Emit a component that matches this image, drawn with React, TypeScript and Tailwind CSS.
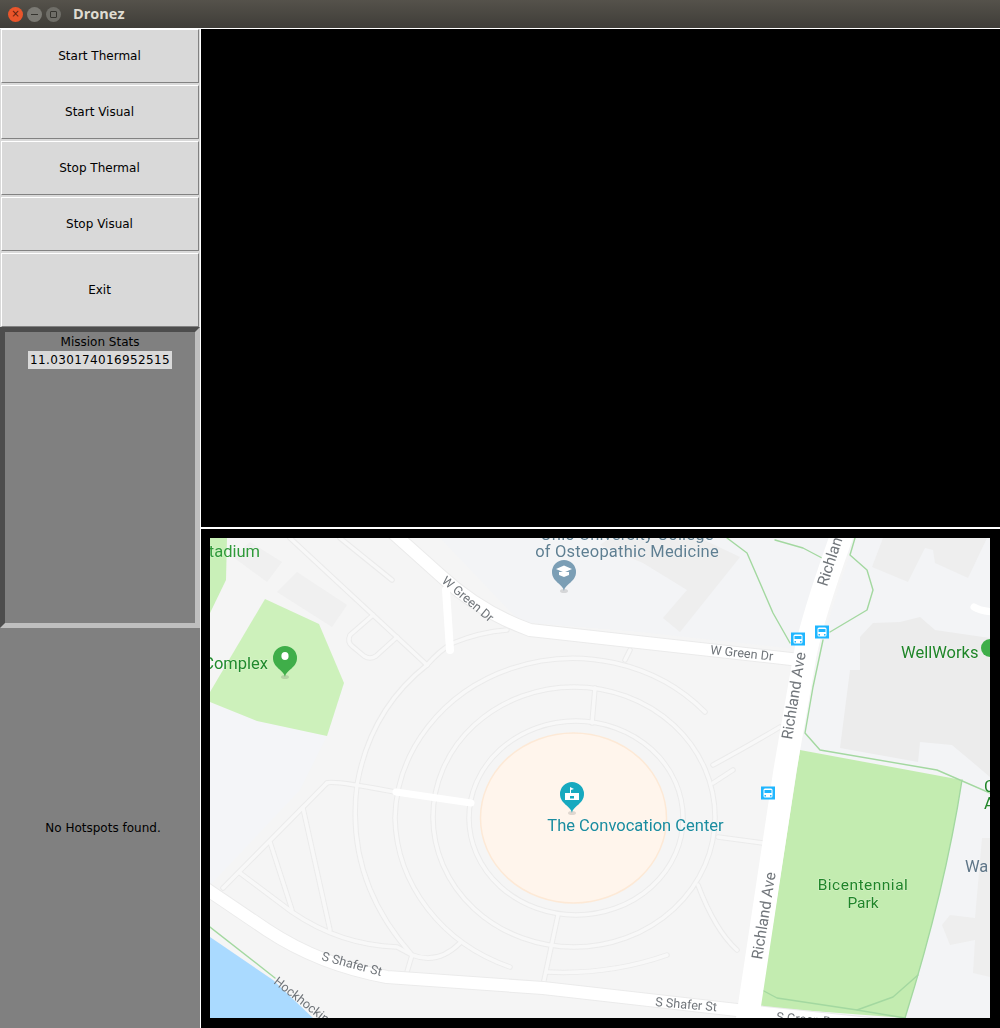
const buttons = [
  { label: 'Start Thermal', height: 'h-[54px]' },
  { label: 'Start Visual', height: 'h-[54px]' },
  { label: 'Stop Thermal', height: 'h-[54px]' },
  { label: 'Stop Visual', height: 'h-[54px]' },
  { label: 'Exit', height: 'h-[74px]' },
];

// service roads on the campus, drawn twice: grey casing and pale fill
const minorRoads = [
  'M 290 538 L 373 615 L 427 665',
  'M 340 538 L 392 580',
  'M 373 615 L 350 635 Q 347 642 352 646 L 364 656 Q 370 660 376 656 L 397 637',
  'M 427 665 Q 440 650 453 643 Q 480 632 507 630',
  'M 705 712 A 178 163 0 0 0 395 818 A 178 163 0 0 0 510 967',
  'M 547 972 Q 610 975 667 955',
  'M 427 665 Q 370 710 357 785 Q 345 880 412 955 Q 438 965 460 943',
  'M 327 783 L 223 888',
  'M 327 783 Q 332 780 395 792',
  'M 303 808 L 330 930',
  'M 270 842 L 292 910',
  'M 240 873 L 292 912 Q 340 945 397 947 L 412 955 L 407 972',
  'M 558 915 L 543 985',
  'M 595 688 L 592 723',
  'M 630 650 L 625 660',
  'M 713 783 L 733 770 M 713 765 Q 750 745 780 727',
  'M 718 837 L 763 843',
  'M 698 885 Q 715 930 737 950',
];

const greenPaths = [
  'M 727 538 L 747 553 L 773 613 L 790 643',
  'M 775 540 L 803 548 L 822 558',
  'M 855 538 L 850 555 L 867 570 L 873 590 L 867 610 L 830 632',
  'M 823 640 L 813 687 L 805 733 L 820 750 L 937 770 L 990 793',
  'M 762 990 L 777 998 L 857 1010 L 905 1018',
  'M 857 1010 L 893 997 L 918 975',
  'M 210 927 L 275 978',
  'M 962 780 Q 945 890 905 1018',
];

function BusStop({ x, y }: { x: number; y: number }) {
  return (
    <g transform={`translate(${x} ${y})`}>
      <rect x="-7" y="-6.5" width="14" height="13" fill="#1fb6ff" />
      <rect x="-4.5" y="-4.5" width="9" height="9" rx="1.5" fill="#ffffff" />
      <rect x="-3.5" y="-3" width="7" height="3" fill="#1fb6ff" />
      <rect x="-3.5" y="2" width="1.5" height="1.5" fill="#1fb6ff" />
      <rect x="2" y="2" width="1.5" height="1.5" fill="#1fb6ff" />
    </g>
  );
}

function Pin({ x, y, color }: { x: number; y: number; color: string }) {
  return (
    <g transform={`translate(${x} ${y})`}>
      <ellipse cx="0" cy="26" rx="4" ry="2" fill="#000000" opacity="0.12" />
      <path d="M 0 26 C -1 19 -12 17 -12 7 A 12 12 0 0 1 12 7 C 12 17 1 19 0 26 Z" fill={color} />
    </g>
  );
}

function MapPicture() {
  return (
    <svg
      viewBox="210 538 780 480"
      className="h-[480px] w-[780px] blur-[0.35px]"
      fontFamily="Roboto, sans-serif"
    >
      <rect x="210" y="538" width="780" height="480" fill="#f5f5f5" />

      {/* off campus ground */}
      <polygon points="210,690 345,683 327,736 300,790 215,880 210,885" fill="#f4f5f8" />
      <polygon points="440,538 855,538 805,650 640,632 520,622" fill="#f3f4f6" />
      <polygon points="855,538 990,538 990,1018 905,1018 962,780 800,750 822,640" fill="#f3f4f6" />

      {/* buildings */}
      <polygon points="233,557 250,542 282,562 267,582" fill="#f0f0f0" />
      <polygon points="277,592 297,572 347,605 332,627" fill="#f0f0f0" />
      <polygon points="740,557 680,632 663,618 687,590 643,563 600,545 610,538 700,538" fill="#eeeeee" />
      <polygon points="883,538 872,567 908,582 925,548 933,550 935,563 968,578 987,538" fill="#eeeeee" />
      <polygon points="873,623 900,622 920,617 935,630 990,638 990,777 970,760 952,745 920,742 918,762 840,748 850,670 860,670 860,637" fill="#ececec" />
      <polygon points="982,838 990,838 990,977 973,973 975,940 950,945 942,925 950,915 975,918" fill="#eeeeee" />

      {/* parks and water */}
      <polygon points="210,538 227,538 226,580 210,613" fill="#c9f0b8" />
      <polygon points="210,692 265,599 319,624 344,683 327,736 257,721 210,702" fill="#cdf1bb" />
      <path d="M 800 750 L 962 780 Q 945 890 905 1018 L 760 1007 Z" fill="#c3ecb0" />
      <polygon points="210,937 273,980 313,1018 210,1018" fill="#aadaff" />

      {/* convocation center */}
      <ellipse cx="573.5" cy="818" rx="93" ry="85" fill="#fff5ec" stroke="#fde9d6" strokeWidth="1.5" />

      {/* campus service roads */}
      <g fill="none" strokeLinecap="round" strokeLinejoin="round">
        <g stroke="#ebebeb" strokeWidth="5.5">
          <ellipse cx="576" cy="818" rx="107" ry="97" />
          <ellipse cx="574" cy="817" rx="141" ry="130" />
          {minorRoads.map((d) => (
            <path key={d} d={d} />
          ))}
        </g>
        <g stroke="#f8f8f8" strokeWidth="3.5">
          <ellipse cx="576" cy="818" rx="107" ry="97" />
          <ellipse cx="574" cy="817" rx="141" ry="130" />
          {minorRoads.map((d) => (
            <path key={d} d={d} />
          ))}
        </g>

        {/* green walking paths */}
        <g stroke="#a3d8a0" strokeWidth="1.4">
          {greenPaths.map((d) => (
            <path key={d} d={d} />
          ))}
        </g>

        {/* main roads */}
        <g stroke="#ebebeb">
          <path strokeWidth="14" d="M 392 532 L 440 575 Q 480 612 530 630 L 800 660" />
          <path strokeWidth="14" d="M 205 888 L 267 930 Q 320 965 387 977 L 543 988 L 737 1010 L 870 1024" />
        </g>
        <g stroke="#ffffff">
          <path strokeWidth="12" d="M 392 532 L 440 575 Q 480 612 530 630 L 800 660" />
          <path strokeWidth="12" d="M 205 888 L 267 930 Q 320 965 387 977 L 543 988 L 737 1010 L 870 1024" />
          <path strokeWidth="8" d="M 446 590 L 450 650" />
          <path strokeWidth="7" d="M 396 792 L 471 803" />
          <path strokeWidth="7" d="M 974 607 Q 980 611 994 612" />
          <path strokeWidth="23" strokeLinecap="butt" d="M 843 532 Q 813 615 805 655 L 785 770 L 747 1022" />
        </g>
      </g>

      <BusStop x={798} y={639} />
      <BusStop x={822} y={632} />
      <BusStop x={768} y={793} />

      <Pin x={564} y={565} color="#7b9eb5" />
      <path d="M 556 569 L 564 565.5 L 572 569 L 564 572.5 Z M 559 572 L 569 572 L 569 575 L 564 577 L 559 575 Z" fill="#ffffff" />
      <Pin x={285} y={651} color="#3fae49" />
      <ellipse cx="285" cy="656" rx="3.6" ry="4" fill="#ffffff" />
      <Pin x={572} y={787} color="#17a9bf" />
      <path d="M 565 800 L 565 793 L 570 793 L 570 787 L 574 789 L 571 790 L 571 793 L 579 793 L 579 800 Z" fill="#ffffff" />
      <rect x="570" y="796" width="4" height="2.5" fill="#17a9bf" />
      <circle cx="990" cy="648" r="9" fill="#3fae49" />

      {/* labels */}
      <g fontSize="16.5" stroke="#ffffff" strokeOpacity="0.3" strokeWidth="1" paintOrder="stroke">
        <text x="627" y="540" textAnchor="middle" fill="#5f7f92" letterSpacing="0.2">Ohio University College</text>
        <text x="627" y="557" textAnchor="middle" fill="#5f7f92" letterSpacing="0.2">of Osteopathic Medicine</text>
        <text x="199" y="557" fill="#2f9a3a">Stadium</text>
        <text x="268" y="669" textAnchor="end" fill="#1f8a2c">Complex</text>
        <text x="901" y="658" fill="#1f8528">WellWorks</text>
        <text x="635.5" y="831" textAnchor="middle" fill="#1a8c9f">The Convocation Center</text>
        <text x="863" y="890" textAnchor="middle" fill="#1f8528" letterSpacing="0.5" fontSize="15.5">Bicentennial</text>
        <text x="863" y="908" textAnchor="middle" fill="#1f8528" fontSize="15.5">Park</text>
        <text x="965" y="872" fill="#5f7688">Wa</text>
        <text x="984" y="792" fill="#1f8528">C</text>
        <text x="984" y="809" fill="#1f8528">A</text>
      </g>
      <g fontSize="12.6" fill="#70757a">
        <text transform="translate(441 582) rotate(40)">W Green Dr</text>
        <text transform="translate(710 654) rotate(6)">W Green Dr</text>
        <text transform="translate(321 960) rotate(15)">S Shafer St</text>
        <text transform="translate(655 1006) rotate(5)">S Shafer St</text>
        <text transform="translate(776 1021) rotate(5)">S Green Dr</text>
        <text transform="translate(273 983) rotate(38)">Hockhocking</text>
      </g>
      <g fontSize="15.4" fill="#70757a">
        <text transform="translate(792 740) rotate(-81)">Richland Ave</text>
        <text transform="translate(762 960) rotate(-81)">Richland Ave</text>
        <text transform="translate(827 587) rotate(-72)">Richland Ave</text>
      </g>
    </svg>
  );
}

export default function App() {
  return (
    <div className="flex h-[1028px] w-[1000px] flex-col overflow-hidden bg-white font-['DejaVu_Sans',sans-serif] text-[12px] text-black">
      {/* title bar */}
      <div className="flex h-[28px] items-center bg-gradient-to-b from-[#55524b] to-[#3f3d38] pl-[8px]">
        <div className="flex gap-[4px]">
          <span className="flex h-[15px] w-[15px] items-center justify-center rounded-full bg-[#e9552b] text-[10px] leading-none text-[#5a1c0c]">
            ×
          </span>
          <span className="flex h-[15px] w-[15px] items-center justify-center rounded-full bg-[#7b7a74]">
            <span className="h-[1px] w-[7px] bg-[#35342f]" />
          </span>
          <span className="flex h-[15px] w-[15px] items-center justify-center rounded-full bg-[#6f6e68]">
            <span className="h-[7px] w-[7px] rounded-[1px] border border-[#35342f]" />
          </span>
        </div>
        <span className="ml-[12px] font-['Open_Sans',sans-serif] text-[14.5px] font-bold text-[#dfdbd2]">Dronez</span>
      </div>

      <div className="flex min-h-0 flex-1 bg-white pt-px">
        {/* left column */}
        <div className="flex w-[200px] shrink-0 flex-col bg-[#808080]">
          <div className="flex flex-col gap-[2px] bg-[#d9d9d9] px-px">
            {buttons.map((b) => (
              <div
                key={b.label}
                className={`flex ${b.height} items-center justify-center border border-t-white border-r-[#828282] border-b-[#828282] border-l-white bg-[#d9d9d9] pr-px`}
              >
                {b.label}
              </div>
            ))}
          </div>

          <div className="flex h-[301px] flex-col items-center border-[5px] border-t-[#4d4d4d] border-r-[#bfbfbf] border-b-[#bfbfbf] border-l-[#4d4d4d] bg-[#808080] pt-px">
            <div className="leading-[18px]">Mission Stats</div>
            <div className="bg-[#d9d9d9] px-[2px] leading-[18px] tracking-[0.35px]">11.030174016952515</div>
          </div>

          <div className="flex flex-1 items-center justify-center pl-[6px]">No Hotspots found.</div>
        </div>

        {/* right column */}
        <div className="ml-px flex min-w-0 flex-1 flex-col">
          <div className="h-[498px] bg-black" />
          <div className="mt-[2px] flex flex-1 items-start bg-black pt-[9px] pl-[9px]">
            <MapPicture />
          </div>
        </div>
      </div>
    </div>
  );
}
